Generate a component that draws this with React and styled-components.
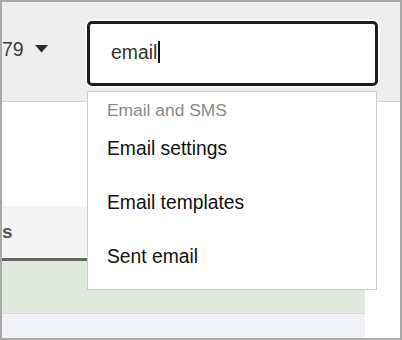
import React from "react";
import styled, { createGlobalStyle } from "styled-components";

const Global = createGlobalStyle`
  html, body { margin: 0; padding: 0; background: #fff; }
  * { box-sizing: border-box; }
  body { font-family: "Liberation Sans", Arial, sans-serif; }
`;

const Frame = styled.div`
  width: 402px;
  height: 340px;
  border: 2px solid #a8a8a8;
  overflow: hidden;
  position: relative;
  background: #fff;
  display: flex;
  flex-direction: column;
`;

const TopBar = styled.div`
  height: 100px;
  flex: 0 0 auto;
  background: #eeeeee;
  border-bottom: 1px solid #d4d4d4;
  display: flex;
  align-items: flex-start;
  padding-top: 19px;
`;

const Selector = styled.div`
  flex: 0 0 85px;
  display: flex;
  align-items: center;
  margin-top: 17px;
  height: 22px;
  font-size: 19.5px;
  line-height: 22px;
  color: #3c3c3c;
`;

const Caret = styled.svg`
  margin-left: 11px;
  width: 13px;
  height: 8px;
  fill: #2a2a2a;
`;

const SearchWrap = styled.div`
  position: relative;
  width: 291px;
`;

const SearchBox = styled.div`
  height: 65px;
  border: 3px solid #1e1e1e;
  border-radius: 5px;
  background: #fff;
  box-shadow: 0 0 0 1.5px #ffffff;
  padding: 17px 21px 0;
`;

const TextLine = styled.div`
  display: flex;
  align-items: center;
  height: 22px;
  font-size: 19.4px;
  line-height: 22px;
  color: #333;
`;

const TextCaret = styled.span`
  display: block;
  width: 2px;
  height: 22px;
  margin-left: 1px;
  background: #111;
`;

const Menu = styled.div`
  position: absolute;
  top: 70px;
  left: 0;
  width: 290px;
  height: 199px;
  background: #fff;
  border: 1px solid #cccccc;
  padding: 8px 0 5px;
  z-index: 5;
`;

const MenuHeading = styled.div`
  font-size: 17.4px;
  line-height: 20px;
  color: #8a8a8a;
  padding: 0 19px;
  margin-bottom: 2px;
`;

const MenuItem = styled.div`
  font-size: 19.3px;
  line-height: 22px;
  color: #111;
  padding: 16px 19px;
`;

const Body = styled.div`
  flex: 1 1 auto;
  padding-top: 104px;
`;

const Table = styled.div`
  width: 363px;
  display: flex;
  flex-direction: column;
`;

const HeadRow = styled.div`
  height: 55px;
  background: #f4f4f4;
  border-bottom: 3px solid #666666;
  display: flex;
  align-items: center;
  font-size: 19px;
  line-height: 22px;
  font-weight: bold;
  color: #555;
`;

const Row = styled.div`
  height: ${(p) => p.$h}px;
  background: ${(p) => p.$bg};
  border-bottom: ${(p) => (p.$line ? "1px solid #d6dcd6" : "none")};
`;

export default function App() {
  return (
    <>
      <Global />
      <Frame>
        <TopBar>
          <Selector>
            <span>79</span>
            <Caret viewBox="0 0 13 8">
              <path d="M0 0 H13 L6.5 7.5 Z" />
            </Caret>
          </Selector>
          <SearchWrap>
            <SearchBox>
              <TextLine>
                <span>email</span>
                <TextCaret />
              </TextLine>
            </SearchBox>
            <Menu>
              <MenuHeading>Email and SMS</MenuHeading>
              <MenuItem>Email settings</MenuItem>
              <MenuItem>Email templates</MenuItem>
              <MenuItem>Sent email</MenuItem>
            </Menu>
          </SearchWrap>
        </TopBar>
        <Body>
          <Table>
            <HeadRow>s</HeadRow>
            <Row $h={53} $bg="#dfeadd" $line />
            <Row $h={30} $bg="#f1f2f7" />
          </Table>
        </Body>
      </Frame>
    </>
  );
}
